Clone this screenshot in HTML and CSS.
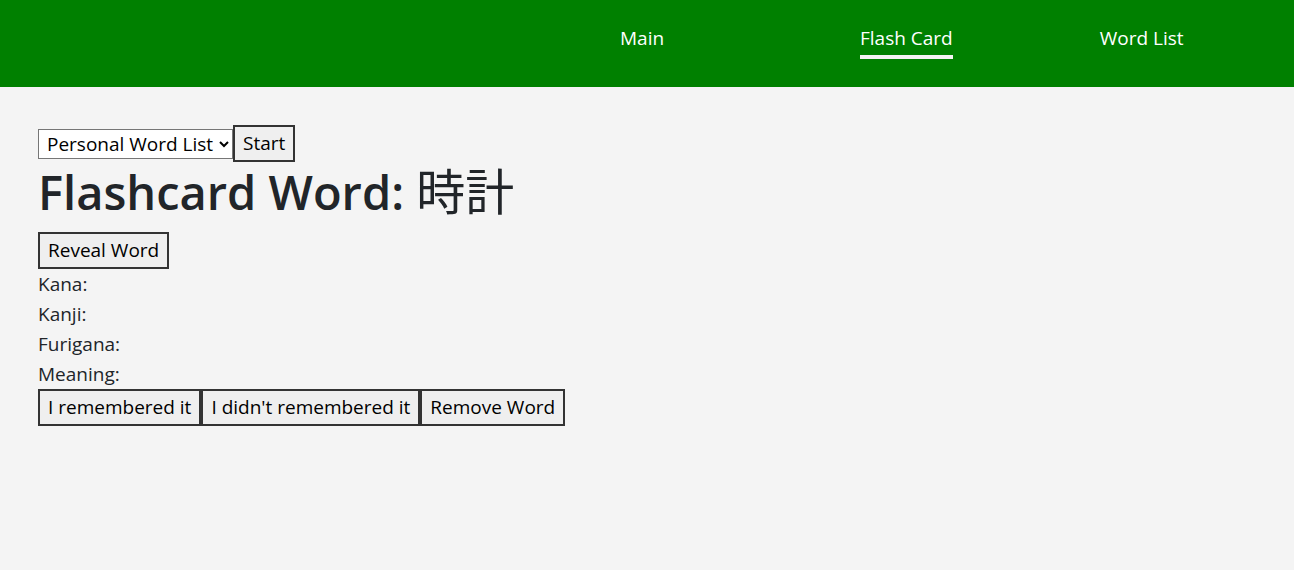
FILE: index.html
```html
<!DOCTYPE html>
<html lang="en">
<head>
<meta charset="utf-8">
<title>Flash Card</title>
<link rel="stylesheet" href="styles.css">
</head>
<body>
<header class="topbar">
  <nav class="nav">
    <a class="nav-item" href="#">Main</a>
    <a class="nav-item active" href="#">Flash Card</a>
    <a class="nav-item" href="#">Word List</a>
  </nav>
</header>
<main class="content">
  <div class="controls">
    <select class="list-select"><option>Personal Word List</option></select><button class="btn">Start</button>
  </div>
  <h1 class="title">Flashcard Word: <span class="cjk">時計</span></h1>
  <button class="btn">Reveal Word</button>
  <div class="field">Kana:</div>
  <div class="field">Kanji:</div>
  <div class="field">Furigana:</div>
  <div class="field">Meaning:</div>
  <div class="actions"><button class="btn">I remembered it</button><button class="btn">I didn't remembered it</button><button class="btn">Remove Word</button></div>
</main>
</body>
</html>
```
FILE: styles.css
```css
html, body {
  margin: 0;
  padding: 0;
}
body {
  background: #f4f4f4;
  color: #212529;
  font-family: "Open Sans", "Noto Sans CJK JP", sans-serif;
  font-size: 19px;
  line-height: 30px;
  overflow: hidden;
}
.topbar {
  background: #008000;
  height: 87px;
  overflow: hidden;
}
.nav {
  display: flex;
  padding-left: 620px;
  height: 100%;
}
.nav-item {
  flex: 0 0 240px;
  color: #ffffff;
  text-decoration: none;
  padding-top: 23px;
  line-height: 30px;
}
.nav-item.active {
  flex: 0 0 auto;
  margin-right: 147px;
  border-bottom: 4px solid #f4f4f4;
  height: 32px;
}
.content {
  padding: 38px 38px 0 38px;
}
.controls {
  display: flex;
  align-items: center;
}
.list-select {
  font-family: inherit;
  font-size: 19px;
  color: #000;
  background: #fff;
  border: 1px solid #767676;
  border-radius: 0;
  height: 30px;
  padding: 0 2px 0 4px;
}
.btn {
  font-family: inherit;
  font-size: 19px;
  line-height: 30px;
  color: #000;
  background: #efefef;
  border: 2px solid #333;
  border-radius: 0;
  padding: 1px 8px 2px;
  margin: 0;
}
.title {
  font-size: 47px;
  font-weight: 600;
  line-height: 60px;
  height: 60px;
  margin: 0 0 10px 0;
}
.cjk {
  font-family: "Noto Sans CJK JP", sans-serif;
  font-weight: 400;
  font-size: 49px;
  line-height: 0;
}
.field {
  line-height: 30px;
}
.actions {
  display: flex;
}
```
